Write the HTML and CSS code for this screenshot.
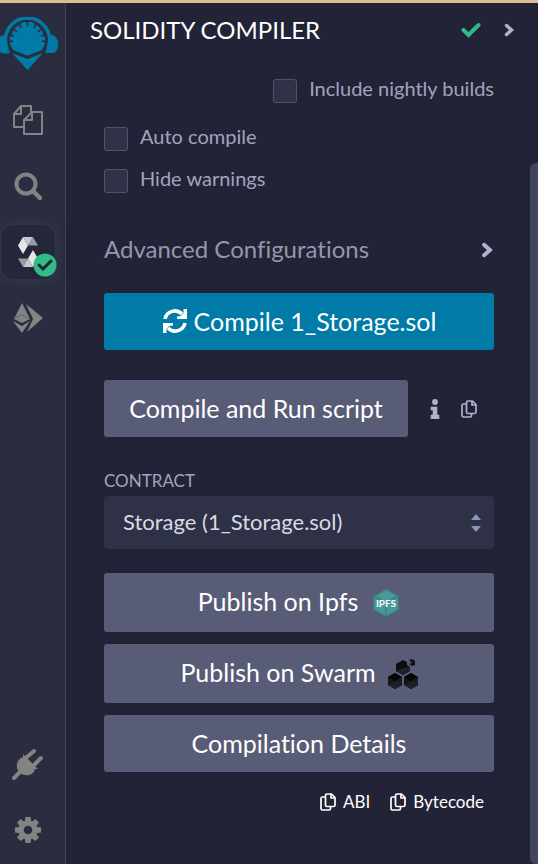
FILE: index.html
```html
<!DOCTYPE html>
<html lang="en">
<head>
<meta charset="utf-8">
<meta name="viewport" content="width=device-width, initial-scale=1">
<title>Solidity Compiler</title>
<link rel="stylesheet" href="styles.css">
</head>
<body>
<svg class="defs" width="0" height="0" aria-hidden="true">
  <symbol id="copy" viewBox="0 0 16 18">
    <path d="M5 4H2.500Q1 4 1 5.500V15.500Q1 17 2.500 17H9Q10.500 17 10.500 15.500V13.500M7 1H11.500L15 4.500V12Q15 13.500 13.500 13.500H7Q5.500 13.500 5.500 12V2.500Q5.500 1 7 1ZM11 1V5H15" fill="none" stroke="currentColor" stroke-width="1.700" stroke-linejoin="round"/>
  </symbol>
  <symbol id="chevron" viewBox="0 0 12 16">
    <path d="M3.500 3.500L8.500 8L3.500 12.500" fill="none" stroke="currentColor" stroke-width="3.400" stroke-linecap="round"/>
  </symbol>
  <symbol id="cube" viewBox="0 0 14 16">
    <path d="M7 0L14 4V12L7 16L0 12V4Z" fill="#15151b"/>
    <path d="M7 0L14 4L7 8L0 4Z" fill="#050507"/>
    <path d="M7 8L14 4V12L7 16Z" fill="#1b1b22"/>
    <path d="M7 8L14 12L7 16L0 12Z" fill="#202028"/>
  </symbol>
</svg>
<div class="app">
  <nav class="sidebar" aria-label="Plugins">
    <a class="logo" href="#" aria-label="Home">
      <svg width="58" height="54" viewBox="0 0 58 54">
        <path d="M0 20Q1 18 5 18L10 36Q6 37 2 36L0 35ZM50 18Q58 18 58 27Q58 36 52 36H45Z" fill="#007aa6"/>
        <circle cx="27.500" cy="23" r="21" fill="#2a2c3f"/>
        <path d="M7 31A22 22 0 1 1 48 31" fill="none" stroke="#007aa6" stroke-width="3.500"/>
        <path d="M13 33L10 27V20L15 11L23 5H32L40 11L45 20V27L42 33L27.500 39Z" fill="#007aa6"/>
        <path d="M9 25L13 24M9 18L14 19M13 11L17 15M19 6L21 11M27.500 4V9M36 6L34 11M42 11L38 15M46 18L41 19M46 25L42 24" fill="none" stroke="#2a2c3f" stroke-width="1.600"/>
        <path d="M10 34L27.500 40.500L45 34" fill="none" stroke="#2a2c3f" stroke-width="3"/>
        <path d="M12 36L27.500 42L43 36L27.500 53Z" fill="#007aa6"/>
      </svg>
    </a>
    <button class="tool" type="button" aria-label="File explorer">
      <svg width="32" height="32" viewBox="0 0 32 32" fill="#2a2c3f" stroke="#838383" stroke-width="2" stroke-linejoin="round"><path d="M9 2H19V23H2V10ZM9 2V10H2"/><path d="M20 8H30V30H12V16ZM20 8V16H12"/></svg>
    </button>
    <button class="tool" type="button" aria-label="Search">
      <svg width="28" height="28" viewBox="0 0 28 28" fill="none" stroke="#838383"><circle cx="12" cy="12" r="9.500" stroke-width="4"/><path d="M19 19L26 26" stroke-width="4.500" stroke-linecap="round"/></svg>
    </button>
    <button class="tool active" type="button" aria-label="Solidity compiler">
      <svg width="20" height="32" viewBox="0 0 20 32"><g id="facets"><path d="M5 1L10 9.500L5 18L0 9.500Z" fill="#e6e6e9"/><path d="M5 1H15L10 9.500Z" fill="#c6c6cc"/><path d="M15 1L20 9.500H10Z" fill="#9b9ba5"/></g><use href="#facets" transform="rotate(180 10 16)"/></svg>
      <svg class="badge" width="24" height="24" viewBox="0 0 24 24"><circle cx="12" cy="12" r="11.500" fill="#32ba89"/><path d="M6 12L10 16L18 8" fill="none" stroke="#222336" stroke-width="3" stroke-linecap="round"/></svg>
    </button>
    <button class="tool" type="button" aria-label="Deploy and run">
      <svg width="30" height="30" viewBox="0 0 30 30" fill="#838383"><path d="M9 0L17 16L9 20L1 16ZM0 18L9 23L17 18L9 30ZM13 1L30 15L14 29L20 16Z"/><path d="M1 15L9 12L17 16" fill="none" stroke="#62636c"/></svg>
    </button>
    <span class="spacer"></span>
    <button class="tool" type="button" aria-label="Plugin manager">
      <svg width="32" height="32" viewBox="0 0 32 32"><path d="M2 30L9 23M15 9L22 3M22 17L29 10" stroke="#838383" stroke-width="4" stroke-linecap="round"/><path d="M11 6L26 21L23 21Q22 26 17 27Q11 28 7 24Q3 19 6 13Q8 10 11 9Z" fill="#838383"/></svg>
    </button>
    <button class="tool" type="button" aria-label="Settings">
      <svg width="26" height="26" viewBox="-13 -13 26 26"><g fill="#838383"><path id="tooth" d="M-2.500 -13H2.500L3.500 -7H-3.500Z"/><use href="#tooth" transform="rotate(45)"/><use href="#tooth" transform="rotate(90)"/><use href="#tooth" transform="rotate(135)"/><use href="#tooth" transform="rotate(180)"/><use href="#tooth" transform="rotate(225)"/><use href="#tooth" transform="rotate(270)"/><use href="#tooth" transform="rotate(315)"/></g><circle r="6.800" fill="none" stroke="#838383" stroke-width="5"/></svg>
    </button>
  </nav>
  <main class="panel">
    <header class="header">
      <h1>SOLIDITY COMPILER</h1>
      <svg width="20" height="16" viewBox="0 0 20 16" role="img" aria-label="Compiled"><path d="M2.500 8L7.500 13L17.500 3" fill="none" stroke="#32ba89" stroke-width="4" stroke-linecap="round"/></svg>
      <button class="plain" type="button" aria-label="Expand panel"><svg width="12" height="16"><use href="#chevron"/></svg></button>
    </header>
    <div class="content">
      <div class="checks">
        <label class="check nightly"><input type="checkbox"><span>Include nightly builds</span></label>
        <label class="check auto"><input type="checkbox"><span>Auto compile</span></label>
        <label class="check"><input type="checkbox"><span>Hide warnings</span></label>
      </div>
      <button class="advanced" type="button"><span>Advanced Configurations</span><svg width="14" height="20" viewBox="0 0 12 16"><use href="#chevron"/></svg></button>
      <button class="btn primary" type="button">
        <svg width="26" height="26" viewBox="0 0 26 26"><path d="M3 11A10 10 0 0 1 20 6M23 15A10 10 0 0 1 6 20" fill="none" stroke="#fff" stroke-width="3.600"/><path d="M25 1V11H15V8.500L18.500 8L21.500 5V1ZM1 25V15H11V17.500L7.500 18L4.500 21V25Z" fill="#fff"/></svg>
        <span>Compile 1_Storage.sol</span>
      </button>
      <div class="run">
        <button class="btn" type="button">Compile and Run script</button>
        <button class="plain" type="button" aria-label="Information"><svg width="10" height="20" viewBox="0 0 10 20" fill="currentColor"><circle cx="5" cy="3" r="2.900"/><path d="M1 8H7V16H9V20H1V16H3V11H1Z" stroke="currentColor" stroke-linejoin="round" stroke-width=".6"/></svg></button>
        <button class="plain" type="button" aria-label="Copy script"><svg width="16" height="18"><use href="#copy"/></svg></button>
      </div>
      <label class="caption" for="contract">CONTRACT</label>
      <div class="select">
        <select id="contract"><option>Storage (1_Storage.sol)</option></select>
        <svg width="10" height="18" viewBox="0 0 10 18" fill="#8b97b8" aria-hidden="true"><path d="M0 6L5 0L10 6ZM0 12H10L5 18Z"/></svg>
      </div>
      <div class="actions">
        <button class="btn publish" type="button"><span>Publish on Ipfs</span>
          <svg width="28" height="30" viewBox="0 0 28 30"><path d="M14 1L26.500 8V22L14 29L1.500 22V8Z" fill="#378789"/><path d="M14 2L24 8L14 14L4 8ZM2.500 10L13 16V27L2.500 21ZM25.500 10L15 16V27L25.500 21Z" fill="#469a9a"/><text x="14" y="19" text-anchor="middle" class="ipfs">IPFS</text></svg>
        </button>
        <button class="btn publish swarm" type="button"><span>Publish on Swarm</span>
          <svg width="30" height="30" viewBox="0 0 30 30"><use href="#cube" x="0" y="14" width="14" height="16"/><use href="#cube" x="16" y="14" width="14" height="16"/><path d="M15 1L19 3L19 6L22 8V12L15 16L8 12V5Z" fill="#0b0b10"/><path d="M15 9L22 8V12L15 16L8 12Z" fill="#202028"/><path d="M21 1L24 0L27 2V6L24 7L21 5L24 4Z" fill="#111117"/></svg>
        </button>
        <button class="btn" type="button">Compilation Details</button>
      </div>
      <div class="copies">
        <button class="plain" type="button"><svg width="16" height="18"><use href="#copy"/></svg>ABI</button>
        <button class="plain" type="button"><svg width="16" height="18"><use href="#copy"/></svg>Bytecode</button>
      </div>
    </div>
  </main>
  <div class="scroll" aria-hidden="true"><div class="thumb"></div></div>
</div>
</body>
</html>
```
FILE: styles.css
```css
* { box-sizing: border-box; }
body {
  margin: 0;
  background: #222336;
  color: #fff;
  font-family: Lato, "Noto Sans", sans-serif;
  font-variant-ligatures: none;
}
button, select { font: inherit; font-variant-ligatures: none; color: inherit; border: 0; }
button { padding: 0; background: none; cursor: pointer; }
svg { display: block; flex: none; }
.defs { position: absolute; }

.app {
  display: flex;
  min-height: 100vh;
  border-top: 3px solid #dfbd8e;
}

.sidebar {
  display: flex;
  flex: 0 0 66px;
  flex-direction: column;
  gap: 12px;
  padding: 14px 0 7px;
  background: #2a2c3f;
  border-right: 1px solid #3f4057;
}
.logo { margin-bottom: 10px; }
.tool {
  position: relative;
  display: flex;
  align-items: center;
  justify-content: center;
  width: 54px;
  height: 54px;
  margin-left: 1px;
  border-radius: 12px;
}
.active {
  background: #242639;
  box-shadow: 0 0 12px #3b3d51;
}
.badge { position: absolute; right: -2px; bottom: 2px; }
.spacer { flex: 1; }

.panel { flex: 1; min-width: 0; }
.header {
  display: flex;
  align-items: center;
  height: 54px;
  padding: 0 15px 0 24px;
}
h1 {
  flex: 1;
  margin: 0;
  padding-bottom: 2px;
  font-size: 24px;
  font-weight: 400;
}
.plain { display: flex; align-items: center; color: #b1b2cb; }
.header .plain { margin-left: 22px; }

.content { padding: 19px 36px 46px 38px; }
.checks { display: flex; flex-direction: column; align-items: flex-start; gap: 12px; }
.check {
  display: flex;
  align-items: center;
  gap: 12px;
  height: 30px;
  color: #a2a3bd;
  font-size: 20px;
  line-height: 24px;
}
.check span { padding-bottom: 6px; }
.check input {
  appearance: none;
  width: 24px;
  height: 24px;
  margin: 0;
  background: #2f3146;
  border: 1px solid #50516b;
  border-radius: 3px;
}
.nightly { align-self: flex-end; margin-bottom: 6px; }

.advanced {
  display: flex;
  align-items: center;
  justify-content: space-between;
  width: 100%;
  height: 30px;
  margin: 39px 0 28px;
  color: #9596ad;
  font-size: 24px;
}
.advanced span { padding-bottom: 4px; }
.advanced svg { color: #b1b2cb; }

.btn {
  display: flex;
  align-items: center;
  justify-content: center;
  gap: 6px;
  width: 100%;
  min-height: 57px;
  padding-bottom: 2px;
  background: #595c76;
  border-radius: 3px;
  font-size: 25px;
}
.primary { background: #007aa6; }
.run { display: flex; align-items: center; gap: 22px; margin: 30px 0; padding-right: 17px; }
.run .btn { flex: 1; }
.run .plain:last-child { margin-left: -1px; }

.caption {
  display: block;
  height: 29px;
  color: #a2a3bd;
  font-size: 17px;
  line-height: 28px;
}
.select { position: relative; }
.select select {
  appearance: none;
  width: 100%;
  height: 53px;
  padding: 0 36px 2px 19px;
  background: #2f3146;
  border-radius: 4px;
  color: #d9dae4;
  font-size: 22px;
}
.select svg { position: absolute; top: 18px; right: 13px; pointer-events: none; }
.actions { display: flex; flex-direction: column; gap: 12px; margin-top: 24px; }
.publish { min-height: 59px; gap: 14px; padding-bottom: 0; }
.publish span { padding-bottom: 4px; }
.swarm { gap: 12px; }
.ipfs { fill: #fff; font: 700 10px Lato, sans-serif; }

.copies { display: flex; justify-content: flex-end; gap: 20px; margin-top: 18px; padding-right: 10px; }
.copies .plain { gap: 7px; color: #fff; font-size: 17px; line-height: 24px; }

.scroll { flex: 0 0 8px; padding-top: 160px; }
.thumb { height: 100%; background: #40445c; border-radius: 6px 0 0 6px; }
```
